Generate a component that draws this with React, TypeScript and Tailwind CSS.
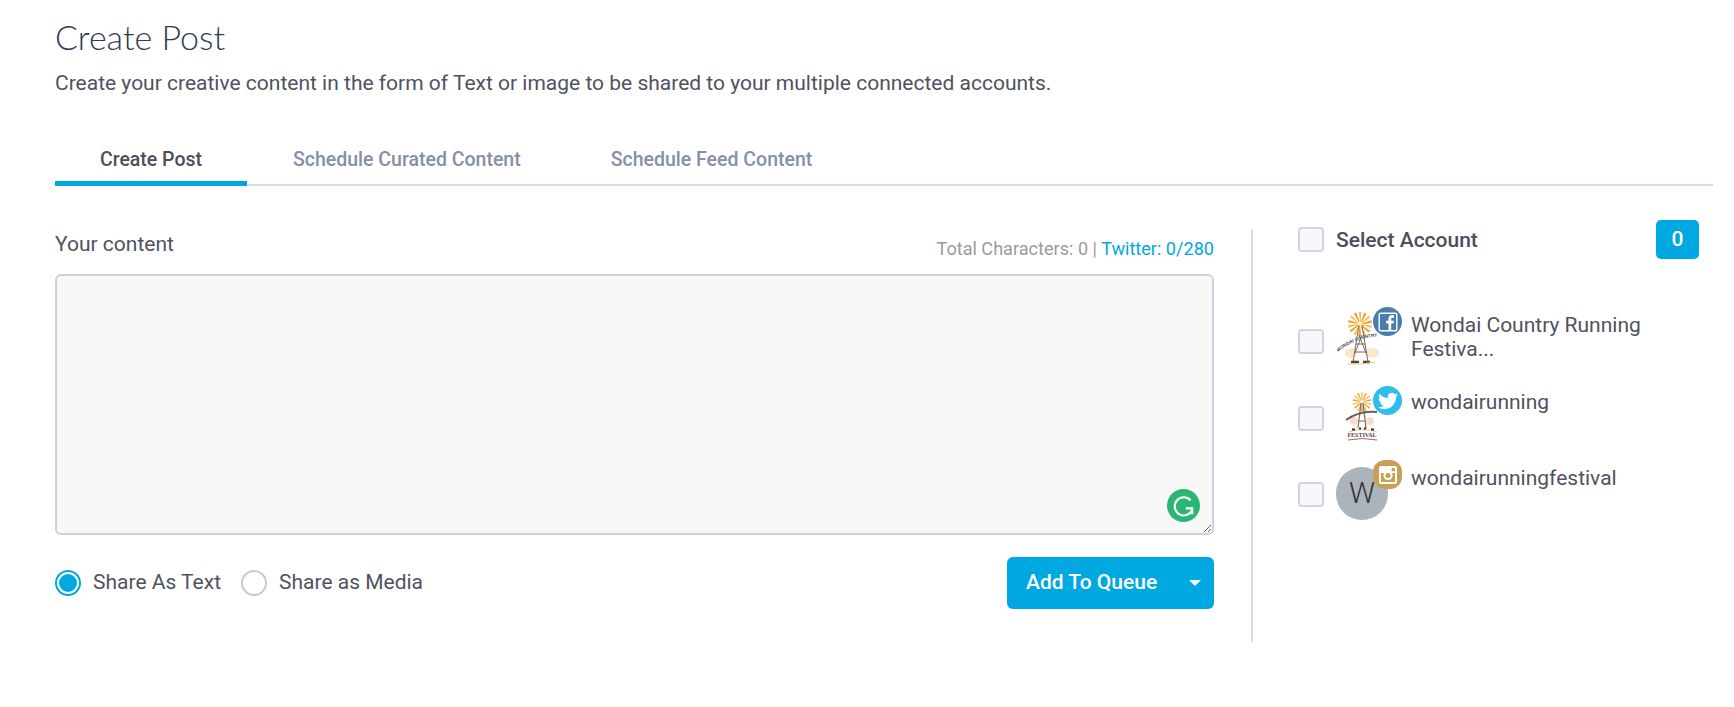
const blue = "#00a8e2";

function Windmill({ variant }: { variant: "full" | "small" }) {
  const rays = Array.from({ length: 14 }, (_, i) => (i * 360) / 14);
  if (variant === "full") {
    return (
      <svg viewBox="0 0 54 56" className="w-[54px] h-[56px]">
        <ellipse cx="14" cy="44" rx="6" ry="5" fill="#f9dfc2" opacity="0.8" />
        <ellipse cx="35" cy="44" rx="7" ry="5" fill="#f9dfc2" opacity="0.8" />
        {rays.map((a, i) => (
          <path key={a} d="M22 3 L24.4 3 L23.6 13 L22.8 13 Z" fill={i % 2 ? "#f0962e" : "#f8c243"} transform={`rotate(${a} 23 15)`} />
        ))}
        <circle cx="23" cy="15" r="2.5" fill="#fff1c4" />
        <path d="M22 16 L16 53 M25 16 L31 53 M19 35 H28 M18 43 H29 M22 26 L29 44 M25 26 L18 44" stroke="#7b6a56" strokeWidth="1" fill="none" />
        <path id="arc-fb" d="M1 43 Q22 25 53 28" fill="none" />
        <text fontSize="4.6" fontWeight="700" fill="#4a4640" fontFamily="Liberation Sans, sans-serif">
          <textPath href="#arc-fb">WONDAI COUNTRY</textPath>
        </text>
        <path d="M14 53 H22 M26 53 H33" stroke="#4f4236" strokeWidth="2.5" />
        <path d="M10 55 Q24 56 38 53" stroke="#f2c777" strokeWidth="1" fill="none" />
      </svg>
    );
  }
  return (
    <svg viewBox="0 0 40 52" className="w-[40px] h-[52px]">
      <ellipse cx="10" cy="30" rx="4" ry="4" fill="#f6cdb0" opacity="0.7" />
      <ellipse cx="26" cy="30" rx="4" ry="4" fill="#f6cdb0" opacity="0.7" />
      {rays.map((a, i) => (
        <path key={a} d="M17 1.5 L19 1.5 L18.4 9.5 L17.6 9.5 Z" fill={i % 2 ? "#efa548" : "#f5c766"} transform={`rotate(${a} 18 11)`} />
      ))}
      <circle cx="18" cy="11" r="2" fill="#fff1c4" />
      <path d="M17 12 L14 37 M19 12 L22 37 M15 30 H21" stroke="#7b6a56" strokeWidth="1.2" fill="none" />
      <path d="M2 29 Q16 19 33 21" fill="none" stroke="#666058" strokeWidth="2" />
      <path d="M5 41 Q18 36 33 41" fill="none" stroke="#eec27a" strokeWidth="1" />
      <path d="M8 38.5 h3 M15 37.5 h2 M20 37.5 h2 M27 38.5 h3" stroke="#2e2a26" strokeWidth="2" />
      <text x="18" y="46" textAnchor="middle" fontSize="6" fontWeight="700" fill="#57433c" fontFamily="Liberation Serif, serif">FESTIVAL</text>
      <path d="M4 49 Q18 46 33 49" fill="none" stroke="#c9545c" strokeWidth="1" />
    </svg>
  );
}

function FacebookBadge() {
  return (
    <div className="absolute top-0 right-0 w-[29px] h-[29px] rounded-full bg-[#4a7cb0] flex items-center justify-center">
      <svg viewBox="0 0 20 20" className="w-[20px] h-[20px]">
        <rect x="1.2" y="1.2" width="17.6" height="17.6" rx="1.5" fill="none" stroke="#fff" strokeWidth="1.4" />
        <path d="M13.2 18.8v-7.3h2.3l.4-2.8h-2.7V7c0-.8.3-1.3 1.4-1.3H16V3.2c-.3 0-1.1-.1-2-.1-2.1 0-3.5 1.2-3.5 3.6v2H8.2v2.8h2.3v7.3z" fill="#fff" />
      </svg>
    </div>
  );
}

function TwitterBadge() {
  return (
    <div className="absolute top-0 right-0 w-[29px] h-[29px] rounded-full bg-[#2fbcee] flex items-center justify-center">
      <svg viewBox="0 0 24 24" className="w-[20px] h-[20px]" fill="#fff">
        <path d="M23.95 4.57a10 10 0 0 1-2.82.77 4.96 4.96 0 0 0 2.16-2.72c-.95.55-2 .95-3.12 1.18a4.92 4.92 0 0 0-8.38 4.48C7.69 8.09 4.07 6.13 1.64 3.16a4.82 4.82 0 0 0-.67 2.48c0 1.71.87 3.21 2.19 4.1a4.9 4.9 0 0 1-2.23-.62v.06a4.92 4.92 0 0 0 3.95 4.83 4.9 4.9 0 0 1-2.21.08 4.94 4.94 0 0 0 4.6 3.42A9.87 9.87 0 0 1 0 19.54a14 14 0 0 0 7.56 2.21c9.05 0 14-7.5 14-13.98 0-.21 0-.42-.02-.63a9.94 9.94 0 0 0 2.41-2.57z" />
      </svg>
    </div>
  );
}

function InstagramBadge() {
  return (
    <div className="absolute top-0 right-0 w-[29px] h-[29px] rounded-[12px] bg-[#c99f56] flex items-center justify-center">
      <svg viewBox="0 0 20 20" className="w-[20px] h-[20px]">
        <rect x="1" y="1" width="18" height="18" rx="2" fill="#fff" />
        <rect x="3" y="8" width="14" height="9" fill="#c99f56" />
        <circle cx="10" cy="10.5" r="4.6" fill="#fff" />
        <circle cx="10" cy="10.5" r="2.5" fill="#c99f56" />
        <rect x="13.6" y="3" width="3.4" height="3.2" rx="0.5" fill="#c99f56" />
      </svg>
    </div>
  );
}

function Checkbox() {
  return <div className="w-[26px] h-[25px] shrink-0 rounded-[4px] border-2 border-[#d5d2e3] bg-[#f8f8fc]" />;
}

export default function App() {
  return (
    <div className="w-[1734px] h-[707px] bg-white overflow-hidden pl-[55px] pr-[21px] font-['Roboto',sans-serif] text-[#4c4e5c]">
      <h1 className="pt-[17px] text-[34px] leading-[40px] font-light text-[#2f3c52] font-['Lato',sans-serif]">Create Post</h1>
      <p className="mt-[12px] text-[21px] leading-[28px] text-[#50525f]">
        Create your creative content in the form of Text or image to be shared to your multiple connected accounts.
      </p>

      {/* tabs */}
      <div className="mt-[43px] flex border-b-2 border-[#d9dce6] h-[46px]">
        <div className="w-[192px] h-[46px] border-b-[5px] border-[#00a8e2] text-center text-[19.5px] leading-[40px] font-medium text-[#4c4e5c]">Create Post</div>
        <div className="ml-[46px] text-[19.5px] leading-[40px] font-medium text-[#8490a6]">Schedule Curated Content</div>
        <div className="ml-[90px] text-[19.5px] leading-[40px] font-medium text-[#8490a6]">Schedule Feed Content</div>
      </div>

      <div className="mt-[42px] flex">
        {/* LEFT */}
        <div className="w-[1159px]">
          <div className="flex items-end justify-between h-[46px]">
            <span className="text-[21px] leading-[28px] mb-[16px] text-[#50525f]">Your content</span>
            <span className="text-[18.1px] leading-[24px] mb-[13px] text-[#9b9b9b]">
              Total Characters: 0 | <span style={{ color: blue }}>Twitter: 0/280</span>
            </span>
          </div>
          <div className="relative">
            <textarea className="block w-full h-[261px] rounded-[6px] border-2 border-[#d0cee0] bg-[#f8f8f8] outline-none" />
            <div className="absolute right-[14px] bottom-[13px] w-[33px] h-[33px] rounded-full bg-[#2ab673] flex items-center justify-center">
              <svg viewBox="0 0 24 24" className="w-[28px] h-[28px]" fill="none" stroke="#fff" strokeWidth="1.9">
                <path d="M17.6 7A7.8 7.8 0 1 0 19 15.5" />
                <path d="M13.5 14H19V19" />
              </svg>
            </div>
          </div>
          <div className="mt-[22px] flex items-center justify-between">
            <div className="flex items-center -mt-[1px]">
              <div className="w-[26px] h-[26px] rounded-full border-2 border-[#00a8e2] p-[2px]">
                <div className="w-full h-full rounded-full bg-[#00a8e2]" />
              </div>
              <span className="ml-[12px] text-[21px] text-[#50525f]">Share As Text</span>
              <div className="ml-[20px] w-[26px] h-[26px] rounded-full border-2 border-[#c9c9c9]" />
              <span className="ml-[12px] text-[21px] text-[#50525f]">Share as Media</span>
            </div>
            <div className="w-[207px] h-[52px] rounded-[6px] bg-[#00a8e2] flex items-center text-white">
              <span className="ml-[19px] text-[21px] font-medium">Add To Queue</span>
              <span className="ml-auto mr-[13px] w-0 h-0 border-x-[6px] border-x-transparent border-t-[6px] border-t-white" />
            </div>
          </div>
        </div>

        {/* divider */}
        <div className="ml-[37px] mt-[1px] w-[2px] h-[413px] bg-[#d9dce6]" />

        {/* RIGHT */}
        <div className="ml-[45px] w-[401px]">
          <div className="flex items-center h-[39px] -mt-[8px] w-[401px]">
            <Checkbox />
            <span className="ml-[12px] mt-[2px] text-[21px] font-medium text-[#4c4e5c]">Select Account</span>
            <span className="ml-auto w-[43px] h-[39px] rounded-[5px] bg-[#00a8e2] text-white text-[21px] font-medium flex items-center justify-center">0</span>
          </div>

          <div className="mt-[48px] flex h-[60px]">
            <div className="mt-[22px]"><Checkbox /></div>
            <div className="relative ml-[12px] w-[66px] h-[60px] shrink-0">
              <div className="absolute left-[1px] top-[2px]"><Windmill variant="full" /></div>
              <FacebookBadge />
            </div>
            <div className="ml-[9px] mt-[6px] text-[21px] leading-[24px] text-[#50525f] w-[300px]">Wondai Country Running Festiva...</div>
          </div>

          <div className="mt-[19px] flex h-[60px]">
            <div className="mt-[20px]"><Checkbox /></div>
            <div className="relative ml-[12px] w-[66px] h-[60px] shrink-0">
              <div className="absolute left-[8px] top-[5px]"><Windmill variant="small" /></div>
              <TwitterBadge />
            </div>
            <div className="ml-[9px] mt-[4px] text-[21px] leading-[24px] text-[#50525f]">wondairunning</div>
          </div>

          <div className="mt-[14px] flex h-[60px]">
            <div className="mt-[22px]"><Checkbox /></div>
            <div className="relative ml-[12px] w-[66px] h-[60px] shrink-0">
              <div className="absolute left-0 top-[7px] w-[52px] h-[53px] rounded-full bg-[#abb3bd] flex items-center justify-center text-[#333] text-[29px] font-light">W</div>
              <InstagramBadge />
            </div>
            <div className="ml-[9px] mt-[6px] text-[21px] leading-[24px] text-[#50525f]">wondairunningfestival</div>
          </div>
        </div>
      </div>
    </div>
  );
}
